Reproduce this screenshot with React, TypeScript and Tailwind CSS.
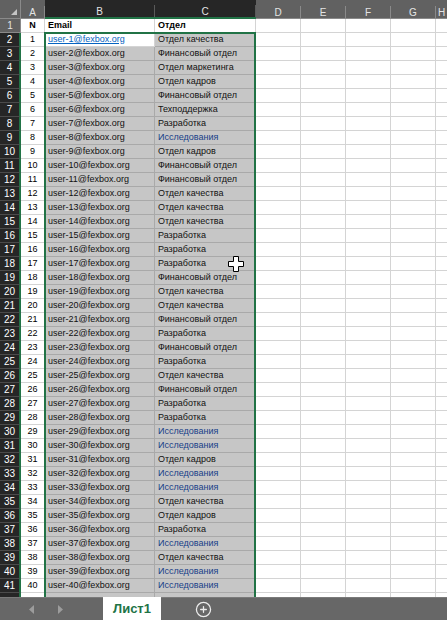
import React from 'react';
import { CirclePlus } from 'lucide-react';

const depts = [
  'Отдел качества', 'Финансовый отдел', 'Отдел маркетинга', 'Отдел кадров', 'Финансовый отдел',
  'Техподдержка', 'Разработка', 'Исследования', 'Отдел кадров', 'Финансовый отдел',
  'Финансовый отдел', 'Отдел качества', 'Отдел качества', 'Отдел качества', 'Разработка',
  'Разработка', 'Разработка', 'Финансовый отдел', 'Отдел качества', 'Отдел качества',
  'Финансовый отдел', 'Разработка', 'Финансовый отдел', 'Разработка', 'Отдел качества',
  'Финансовый отдел', 'Разработка', 'Разработка', 'Исследования', 'Исследования',
  'Отдел кадров', 'Исследования', 'Исследования', 'Отдел качества', 'Отдел кадров',
  'Разработка', 'Исследования', 'Отдел качества', 'Исследования', 'Исследования',
];

const cols = ['A', 'B', 'C', 'D', 'E', 'F', 'G', 'H'];

const ColHeader: React.FC<{ label: string; selected?: boolean }> = ({ label, selected }) => (
  <div className={`h-[19px] flex items-end ${selected ? 'bg-[#262626] border-b-2 border-[#217346]' : 'bg-[#616161] border-b border-[#8a8a8a]'}`}>
    <div className={`h-[12px] w-full flex items-center justify-center border-r ${selected ? 'border-[#5a5a5a]' : 'border-[#8a8a8a]'} text-[10px] text-[#e4e4e4]`}>
      {label}
    </div>
  </div>
);

const Row: React.FC<{ r: number }> = ({ r }) => {
  const n = r - 1;
  const dept = depts[n - 1];
  const header = r === 1;
  const sel = r >= 2;
  const blank = r > 41;
  return (
    <>
      <div
        className={`h-[14px] flex items-center justify-center text-[10px] leading-none ${
          sel
            ? 'bg-[#262626] text-white border-r-2 border-r-[#217346] border-b border-b-[#4b4b4b]'
            : 'bg-[#616161] text-[#e4e4e4] border-r border-r-[#8a8a8a] border-b border-b-[#8a8a8a]'
        }`}
      >
        {blank ? '' : r}
      </div>
      <div className={`h-[14px] flex items-center justify-center bg-white border-r border-b border-[#d4d4d4] text-[9px] text-black ${header ? 'font-bold' : ''}`}>
        {header ? 'N' : blank ? '' : n}
      </div>
      {header ? (
        <div className="h-[14px] flex items-center px-[3px] bg-white border-r border-b border-[#d4d4d4] text-[9px] font-bold text-black">Email</div>
      ) : r === 2 ? (
        <div className="h-[14px] flex items-center px-[3px] bg-white border-r border-b border-[#d4d4d4] text-[9px] text-[#0563c1] underline">user-1@fexbox.org</div>
      ) : (
        <div className="h-[14px] flex items-center px-[3px] bg-[#c6c6c6] border-r border-b border-[#a9a9a9] text-[9px] text-[#111]">
          {blank ? '' : `user-${n}@fexbox.org`}
        </div>
      )}
      {header ? (
        <div className="h-[14px] flex items-center px-[3px] bg-white border-r border-b border-[#d4d4d4] text-[9px] font-bold text-black">Отдел</div>
      ) : (
        <div className={`h-[14px] flex items-center px-[3px] bg-[#c6c6c6] border-r border-b border-[#a9a9a9] text-[9px] whitespace-nowrap ${dept === 'Исследования' ? 'text-[#173f88]' : 'text-[#111]'}`}>
          {blank ? '' : dept}
        </div>
      )}
      {[0, 1, 2, 3, 4].map((i) => (
        <div key={i} className="h-[14px] bg-white border-r border-b border-[#d4d4d4]" />
      ))}
    </>
  );
};

const App: React.FC = () => {
  const rows = Array.from({ length: 42 }, (_, i) => i + 1);
  return (
    <div className="w-[447px] h-[620px] flex flex-col overflow-hidden bg-white font-['Liberation_Sans',Arial,sans-serif]">
      <div className="relative h-[597px] overflow-hidden">
        <div className="grid grid-cols-[21px_24px_110px_101px_45px_45px_45px_45px_12px]">
          <div className="h-[19px] bg-[#616161] border-r border-b border-[#8a8a8a] flex items-end justify-end pr-[3px] pb-[3px]">
            <svg width="6" height="6" viewBox="0 0 6 6">
              <polygon points="6,0 6,6 0,6" fill="#c4c4c4" />
            </svg>
          </div>
          {cols.map((c) => (
            <ColHeader key={c} label={c} selected={c === 'B' || c === 'C'} />
          ))}
          {rows.map((r) => (
            <Row key={r} r={r} />
          ))}
        </div>
        {/* selection outline */}
        <div className="absolute left-[44px] top-[32px] w-[212px] h-[600px] border-2 border-[#217346] pointer-events-none" />
        {/* mouse cursor */}
        <svg className="absolute left-[228px] top-[256px]" width="17" height="16" viewBox="0 0 17 16">
          <path d="M5.5 0.5h5v5h5v5h-5v5h-5v-5h-5v-5h5z" fill="#fff" stroke="#000" strokeWidth="1" />
        </svg>
      </div>
      <div className="h-[23px] flex items-stretch bg-[#676767] border-t border-[#7a7a7a]">
        <div className="w-[103px] flex items-center pl-[29px] gap-[22px] text-[#9c9c9c]">
          <svg width="6" height="9" viewBox="0 0 6 9"><polygon points="5,0 5,9 0,4.5" fill="currentColor" /></svg>
          <svg width="6" height="9" viewBox="0 0 6 9"><polygon points="1,0 1,9 6,4.5" fill="currentColor" /></svg>
        </div>
        <div className="w-[58px] -mt-px bg-white flex items-center justify-center text-[13px] font-bold text-[#217346]">
          Лист1
        </div>
        <div className="w-[84px] flex items-center justify-center">
          <CirclePlus size={17} color="#ececec" strokeWidth={1.8} />
        </div>
      </div>
    </div>
  );
};

export default App;
